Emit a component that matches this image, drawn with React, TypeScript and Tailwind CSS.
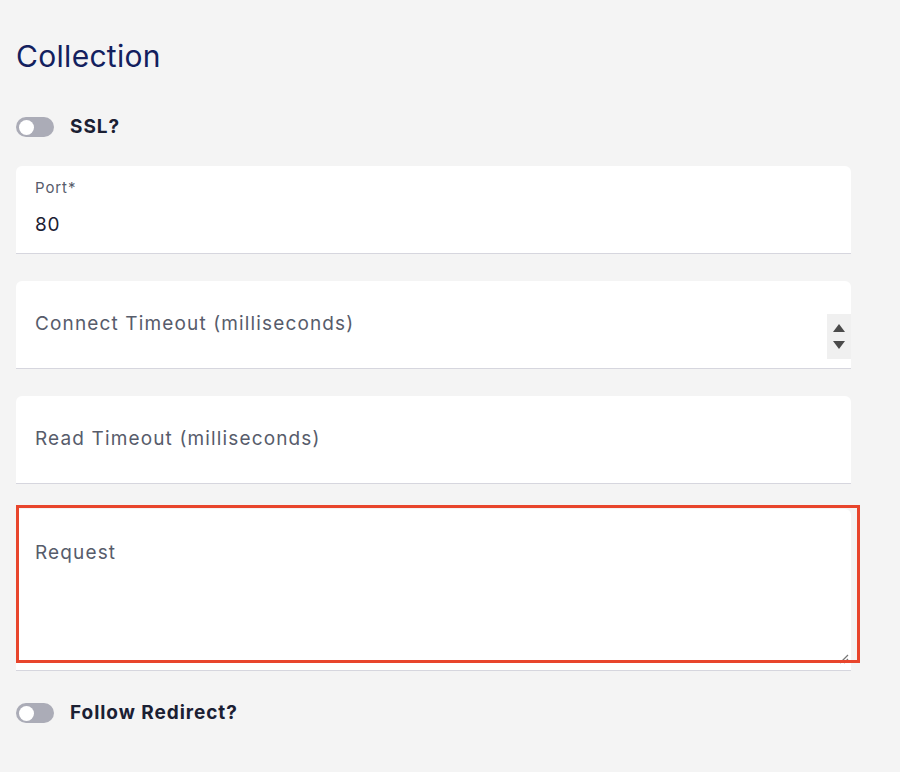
import React from 'react';

function Toggle() {
  return (
    <div className="w-[38px] h-[20px] rounded-full bg-[#abacb7] flex items-center px-[3px] shrink-0">
      <div className="w-[15px] h-[15px] rounded-full bg-white" />
    </div>
  );
}

function ToggleRow({ label }: { label: string }) {
  return (
    <div className="flex items-center gap-4 h-[20px]">
      <Toggle />
      <span className="text-[19px] font-bold tracking-[0.05em] text-[#1b2033]">{label}</span>
    </div>
  );
}

function Field({ label, spinner }: { label: string; spinner?: boolean }) {
  return (
    <div className="relative h-[88px] bg-white rounded-t-[6px] border-b border-[#d6d6de] flex items-center pl-[19px]">
      <span className="text-[19px] tracking-[0.06em] text-[#575c6b]">{label}</span>
      {spinner && (
        <div className="absolute right-0 top-[33px] w-[24px] h-[45px] bg-[#f0f0f0] flex flex-col items-center justify-center gap-[9px]">
          <svg width="12" height="8" viewBox="0 0 12 8"><path d="M6 0L12 8H0z" fill="#4a4a4a" /></svg>
          <svg width="12" height="8" viewBox="0 0 12 8"><path d="M0 0H12L6 8z" fill="#4a4a4a" /></svg>
        </div>
      )}
    </div>
  );
}

export default function App() {
  return (
    <div className="min-h-[772px] bg-[#f4f4f4] pl-4 pr-[49px] pt-[37px] pb-10 font-['Inter','Noto_Sans',sans-serif]">
      <h1 className="text-[30px] leading-[38px] tracking-[0.01em] text-[#13205e]">Collection</h1>

      <div className="mt-[42px]">
        <ToggleRow label="SSL?" />
      </div>

      <div className="mt-[29px] flex flex-col gap-[27px]">
        <div className="h-[88px] bg-white rounded-t-[6px] border-b border-[#d6d6de] pl-[19px] pt-[12px]">
          <div className="text-[15px] leading-[20px] tracking-[0.06em] text-[#575c6b]">Port*</div>
          <div className="mt-[15px] text-[19px] leading-[24px] tracking-[0.04em] text-[#1b2033]">80</div>
        </div>

        <Field label="Connect Timeout (milliseconds)" spinner />
        <Field label="Read Timeout (milliseconds)" />

        <div className="relative h-[162px] -mt-[2px] bg-white rounded-t-[6px] border-b border-[#d6d6de] pl-[19px] pt-[30px]">
          <span className="text-[19px] tracking-[0.06em] text-[#575c6b]">Request</span>
          <svg className="absolute right-[2px] bottom-[6px]" width="12" height="12" viewBox="0 0 12 12">
            <path d="M11 3L3 11M11 7L7 11" stroke="#777" strokeWidth="1.2" />
          </svg>
          <div className="absolute left-0 top-[-4px] w-[844px] h-[158px] border-[3px] border-[#e8452c] pointer-events-none" />
        </div>
      </div>

      <div className="mt-[32px]">
        <ToggleRow label="Follow Redirect?" />
      </div>
    </div>
  );
}
